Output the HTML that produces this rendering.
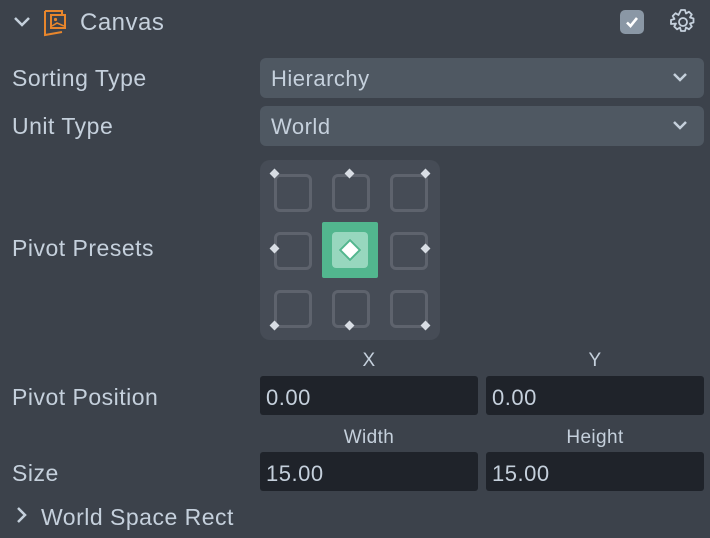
<!DOCTYPE html>
<html><head><style>
body{margin:0;width:710px;height:538px;background:#3c424b;font-family:"Liberation Sans",sans-serif;color:#c5d0dc;position:relative;overflow:hidden}
.a{position:absolute;white-space:nowrap}
.lbl{font-size:23px;left:12px;letter-spacing:0.5px}
.dd{position:absolute;left:260px;width:444px;height:40px;background:#4f5862;border-radius:6px}
.dd span{position:absolute;left:11px;top:8px;font-size:22px;letter-spacing:0.5px}
.dd svg{position:absolute;right:16px;top:14px}
.in{position:absolute;width:218px;height:39px;background:#1f232a;border-radius:3px}
.in span{position:absolute;left:6px;top:9px;font-size:22px;letter-spacing:0.5px}
.cap{font-size:19px;text-align:center;width:218px;letter-spacing:0.4px}
.cell{position:absolute;width:32px;height:32px;border:3px solid #5e636d;border-radius:6px}
.dot{position:absolute;width:7px;height:7px;background:#d8dde4;transform:rotate(45deg)}
</style></head><body>
<svg class="a" style="left:13px;top:16px" width="18" height="12" viewBox="0 0 18 12"><path d="M2 2l7 7 7-7" fill="none" stroke="#c5d0dc" stroke-width="2.5"/></svg>
<svg class="a" style="left:43px;top:9px" width="28" height="28" viewBox="0 0 28 28"><path d="M2 2h17v3M2 2v24l17-3" fill="none" stroke="#e8862c" stroke-width="2"/><rect x="8" y="6" width="14" height="13" fill="none" stroke="#e8862c" stroke-width="2"/><circle cx="12.5" cy="10.5" r="1.6" fill="#e8862c"/><path d="M9 17l5-3 7 3" fill="none" stroke="#e8862c" stroke-width="1.6"/></svg>
<div class="a" style="left:80px;top:9px;font-size:24px;letter-spacing:0.5px">Canvas</div>
<div class="a" style="left:620px;top:10px;width:24px;height:24px;background:#8a97a5;border-radius:5px"></div>
<svg class="a" style="left:624px;top:14px" width="16" height="16" viewBox="0 0 16 16"><path d="M3 8.5l3.5 3.5L13 4" fill="none" stroke="#fff" stroke-width="2.6"/></svg>
<svg class="a" style="left:669px;top:8px" width="28" height="28" viewBox="0 0 28 28"><path d="M12 2h4l1 3.5 3-1.8 2.8 2.8-1.8 3 3.5 1v4l-3.5 1 1.8 3-2.8 2.8-3-1.8-1 3.5h-4l-1-3.5-3 1.8-2.8-2.8 1.8-3L2 16v-4l3.5-1-1.8-3 2.8-2.8 3 1.8z" fill="none" stroke="#c5d0dc" stroke-width="1.8" stroke-linejoin="round"/><circle cx="14" cy="14" r="4" fill="none" stroke="#c5d0dc" stroke-width="1.8"/></svg>

<div class="a lbl" style="top:65px">Sorting Type</div>
<div class="dd" style="top:58px"><span>Hierarchy</span><svg width="16" height="11" viewBox="0 0 16 11"><path d="M2 2l6 6 6-6" fill="none" stroke="#c5d0dc" stroke-width="2.5"/></svg></div>
<div class="a lbl" style="top:113px">Unit Type</div>
<div class="dd" style="top:106px"><span>World</span><svg width="16" height="11" viewBox="0 0 16 11"><path d="M2 2l6 6 6-6" fill="none" stroke="#c5d0dc" stroke-width="2.5"/></svg></div>

<div class="a lbl" style="top:235px">Pivot Presets</div>
<div class="a" style="left:260px;top:160px;width:180px;height:180px;background:#464c56;border-radius:10px"></div>
<div class="cell" style="left:274px;top:174px"></div>
<div class="cell" style="left:332px;top:174px"></div>
<div class="cell" style="left:390px;top:174px"></div>
<div class="cell" style="left:274px;top:232px"></div>
<div class="cell" style="left:390px;top:232px"></div>
<div class="cell" style="left:274px;top:290px"></div>
<div class="cell" style="left:332px;top:290px"></div>
<div class="cell" style="left:390px;top:290px"></div>
<div class="a" style="left:322px;top:222px;width:56px;height:56px;background:#52b68e;border-radius:2px"></div>
<div class="a" style="left:332px;top:232px;width:36px;height:36px;background:#97d7be;border-radius:4px"></div>
<div class="a" style="left:342px;top:242px;width:12px;height:12px;background:#fff;border:2px solid #52b68e;transform:rotate(45deg)"></div>
<div class="dot" style="left:271px;top:170px"></div>
<div class="dot" style="left:346px;top:170px"></div>
<div class="dot" style="left:422px;top:170px"></div>
<div class="dot" style="left:271px;top:245px"></div>
<div class="dot" style="left:422px;top:245px"></div>
<div class="dot" style="left:271px;top:322px"></div>
<div class="dot" style="left:346px;top:322px"></div>
<div class="dot" style="left:422px;top:322px"></div>

<div class="a cap" style="left:260px;top:350px">X</div>
<div class="a cap" style="left:486px;top:350px">Y</div>
<div class="a lbl" style="top:384px">Pivot Position</div>
<div class="in" style="left:260px;top:376px"><span>0.00</span></div>
<div class="in" style="left:486px;top:376px"><span>0.00</span></div>
<div class="a cap" style="left:260px;top:427px">Width</div>
<div class="a cap" style="left:486px;top:427px">Height</div>
<div class="a lbl" style="top:460px">Size</div>
<div class="in" style="left:260px;top:452px"><span>15.00</span></div>
<div class="in" style="left:486px;top:452px"><span>15.00</span></div>

<svg class="a" style="left:16px;top:506px" width="12" height="18" viewBox="0 0 12 18"><path d="M2 2l7 7-7 7" fill="none" stroke="#c5d0dc" stroke-width="2.5"/></svg>
<div class="a" style="left:41px;top:504px;font-size:23px;letter-spacing:0.5px">World Space Rect</div>
</body></html>
